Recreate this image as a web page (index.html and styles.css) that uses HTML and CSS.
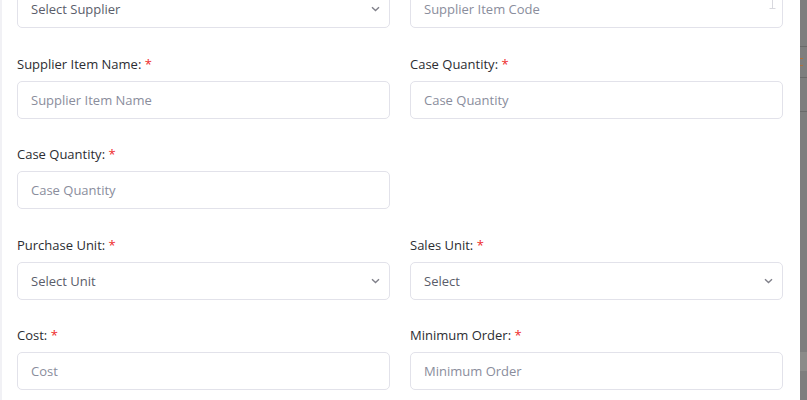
FILE: index.html
```html
<!DOCTYPE html>
<html>
<head>
<meta charset="utf-8">
<link rel="stylesheet" href="styles.css">
</head>
<body>
<div class="screen">
  <div class="modal">
    <form class="form">
      <div class="field first">
        <div class="control select"><span class="value">Select Supplier</span><svg class="chev" width="9" height="6" viewBox="0 0 9 6"><path d="M1 1.2l3.5 3.3 3.5-3.3" fill="none" stroke="#80808a" stroke-width="1.4"/></svg></div>
      </div>
      <div class="field first">
        <div class="control"><span class="ph">Supplier Item Code</span><svg class="ibeam" width="7" height="16" viewBox="0 0 7 16"><path d="M0.5 0.5h6M3.5 0.5v15M0.5 15.5h6" fill="none" stroke="#d8d8de" stroke-width="1"/></svg></div>
      </div>
      <div class="field">
        <label class="label">Supplier Item Name: <span class="req">*</span></label>
        <div class="control"><span class="ph">Supplier Item Name</span></div>
      </div>
      <div class="field">
        <label class="label">Case Quantity: <span class="req">*</span></label>
        <div class="control"><span class="ph">Case Quantity</span></div>
      </div>
      <div class="field">
        <label class="label">Case Quantity: <span class="req">*</span></label>
        <div class="control"><span class="ph">Case Quantity</span></div>
      </div>
      <div class="field"></div>
      <div class="field">
        <label class="label">Purchase Unit: <span class="req">*</span></label>
        <div class="control select"><span class="value">Select Unit</span><svg class="chev" width="9" height="6" viewBox="0 0 9 6"><path d="M1 1.2l3.5 3.3 3.5-3.3" fill="none" stroke="#80808a" stroke-width="1.4"/></svg></div>
      </div>
      <div class="field">
        <label class="label">Sales Unit: <span class="req">*</span></label>
        <div class="control select"><span class="value">Select</span><svg class="chev" width="9" height="6" viewBox="0 0 9 6"><path d="M1 1.2l3.5 3.3 3.5-3.3" fill="none" stroke="#80808a" stroke-width="1.4"/></svg></div>
      </div>
      <div class="field">
        <label class="label">Cost: <span class="req">*</span></label>
        <div class="control"><span class="ph">Cost</span></div>
      </div>
      <div class="field">
        <label class="label">Minimum Order: <span class="req">*</span></label>
        <div class="control"><span class="ph">Minimum Order</span></div>
      </div>
    </form>
  </div>
  <div class="backdrop">
    <div class="bd-seg s1"></div>
    <div class="bd-line"></div>
    <div class="bd-seg s2"><span class="tick"></span><span class="tick t2"></span></div>
    <div class="bd-line"></div>
    <div class="bd-seg s3"></div>
    <div class="bd-line"></div>
    <div class="bd-seg s4"></div>
    <div class="bd-band"></div>
    <div class="bd-seg s5"></div>
  </div>
</div>
</body>
</html>
```
FILE: styles.css
```css
* { box-sizing: border-box; }
html, body { margin: 0; padding: 0; background: #ffffff; overflow: hidden; }
.screen { display: flex; width: 807px; height: 400px; overflow: hidden; }
.modal { width: 800px; height: 400px; background: #fff; border-left: 2px solid #f1f1f5; overflow: hidden; }
.form {
  display: grid;
  grid-template-columns: 373px 373px;
  column-gap: 20px;
  padding-left: 15px;
  margin-top: -10px;
  font-family: "Open Sans", "Noto Sans", sans-serif;
}
.field { margin-bottom: 26.5px; min-height: 64px; }
.field.first { min-height: 38px; }
.label { display: block; height: 18px; line-height: 18px; font-size: 13px; color: #2c2d32; margin-bottom: 8px; }
.req { color: #ee2a2a; }
.control {
  position: relative;
  display: flex; align-items: center; justify-content: space-between;
  height: 38px; border: 1px solid #e2e2ea; border-radius: 5px;
  padding: 0 9px 0 13px; font-size: 13px; background: #fff;
}
.ph { color: #8a8d9c; }
.value { color: #5a5d6a; }
.ibeam { position: absolute; right: 6px; top: 2px; }
.backdrop { flex: 1; display: flex; flex-direction: column; background: #7e7e7e; }
.bd-seg { background: #7e7e7e; position: relative; }
.s1 { height: 46px; }
.s2 { height: 30px; }
.s3 { height: 33px; }
.s4 { height: 240px; }
.s5 { flex: 1; }
.bd-line { height: 1px; background: #6a6a6a; }
.bd-band { height: 19px; background: #8b8b89; }
.tick { position: absolute; left: 0; top: 11px; width: 3px; height: 1px; background: #b0703a; }
.t2 { top: 18px; }
```
